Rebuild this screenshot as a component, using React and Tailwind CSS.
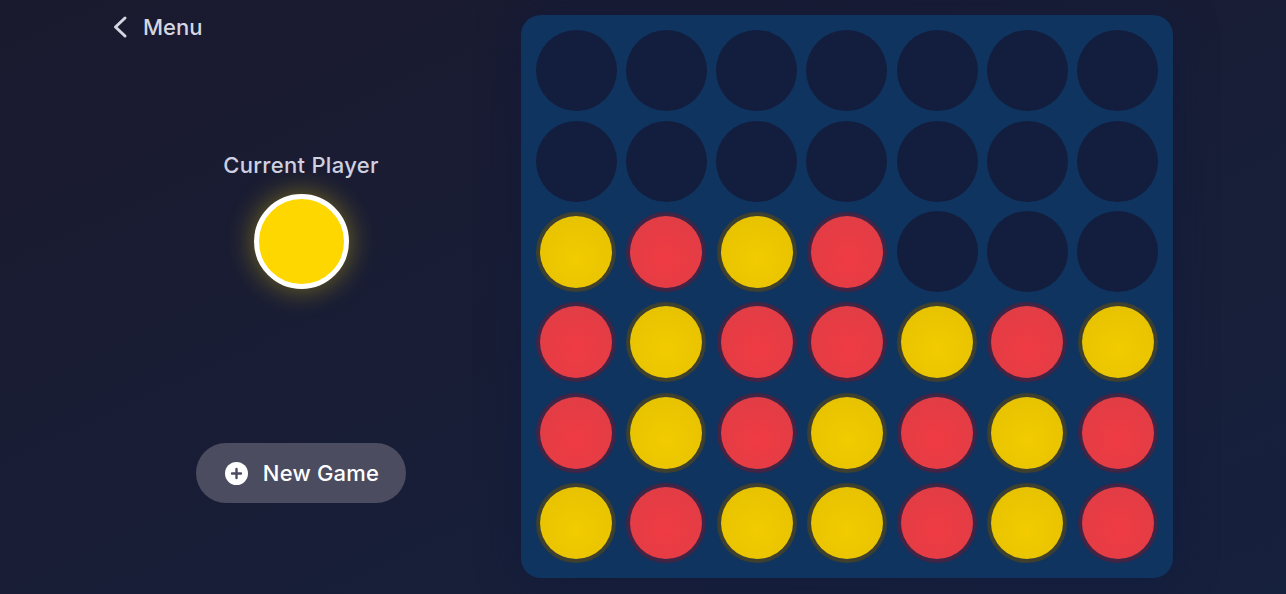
import React from 'react';

const rows = [
  '.......',
  '.......',
  'YRYR...',
  'RYRRYRY',
  'RYRYRYR',
  'YRYYRYR',
];

function Cell({ value }) {
  if (value === 'Y') {
    return (
      <div className="w-[81px] h-[81px] flex items-center justify-center">
        <div className="w-[72px] h-[72px] rounded-full bg-[radial-gradient(circle_at_50%_60%,#f2cc00_0%,#e4bf00_100%)] shadow-[0_0_1px_4px_#40402e]" />
      </div>
    );
  }
  if (value === 'R') {
    return (
      <div className="w-[81px] h-[81px] flex items-center justify-center">
        <div className="w-[72px] h-[72px] rounded-full bg-[radial-gradient(circle_at_50%_60%,#f03b43_0%,#dd3d46_100%)] shadow-[0_0_1px_4px_#432444]" />
      </div>
    );
  }
  return <div className="w-[81px] h-[81px] rounded-full bg-[#131e3e]" />;
}

export default function App() {
  return (
    <div className="w-[1286px] h-[594px] overflow-hidden flex bg-gradient-to-br from-[#1a1a2e] to-[#16213e] font-['Inter',sans-serif]">
      <div className="w-[520.5px] shrink-0 flex flex-col pl-[101px] pr-[19.5px]">
        <div className="flex items-center h-[54px] pl-[8px] text-[22px] leading-none font-medium text-[#d5d6e2]">
          <svg width="22" height="26" viewBox="0 0 22 26" fill="none" stroke="#d5d6e2" strokeWidth="3" strokeLinecap="round" strokeLinejoin="round">
            <path d="M16 4 L6.5 13 L16 22" />
          </svg>
          <span className="ml-[12px]">Menu</span>
        </div>
        <div className="flex flex-col items-center mt-[97px]">
          <p className="text-[22px] leading-[28px] font-medium tracking-[0.3px] text-[#cfd1e0]">Current Player</p>
          <div className="mt-[15px] w-[95px] h-[95px] rounded-full bg-[#ffd700] border-[5px] border-white shadow-[0_0_28px_rgba(255,215,0,0.42)]" />
          <button className="mt-[154px] w-[210px] h-[60px] rounded-full bg-[#4b4c60] flex items-center justify-center gap-[15px] pl-[2px] text-white text-[22px] font-medium tracking-[0.2px]">
            <svg width="23" height="23" viewBox="0 0 23 23">
              <circle cx="11.5" cy="11.5" r="11.5" fill="#ffffff" />
              <path d="M11.5 7 V16 M7 11.5 H16" stroke="#4b4c60" strokeWidth="2.4" strokeLinecap="round" />
            </svg>
            <span>New Game</span>
          </button>
        </div>
      </div>
      <div className="mt-[15px] w-[652.5px] h-[563px] shrink-0 rounded-[20px] bg-[#0f3460] p-[15px] shadow-[0_0_40px_rgba(15,23,60,0.6)]">
        <div className="grid grid-cols-[repeat(7,81px)] grid-rows-[repeat(6,81px)] gap-x-[9.25px] gap-y-[9.5px]">
          {rows.map((row, r) =>
            row.split('').map((value, c) => <Cell key={`${r}-${c}`} value={value} />)
          )}
        </div>
      </div>
    </div>
  );
}
